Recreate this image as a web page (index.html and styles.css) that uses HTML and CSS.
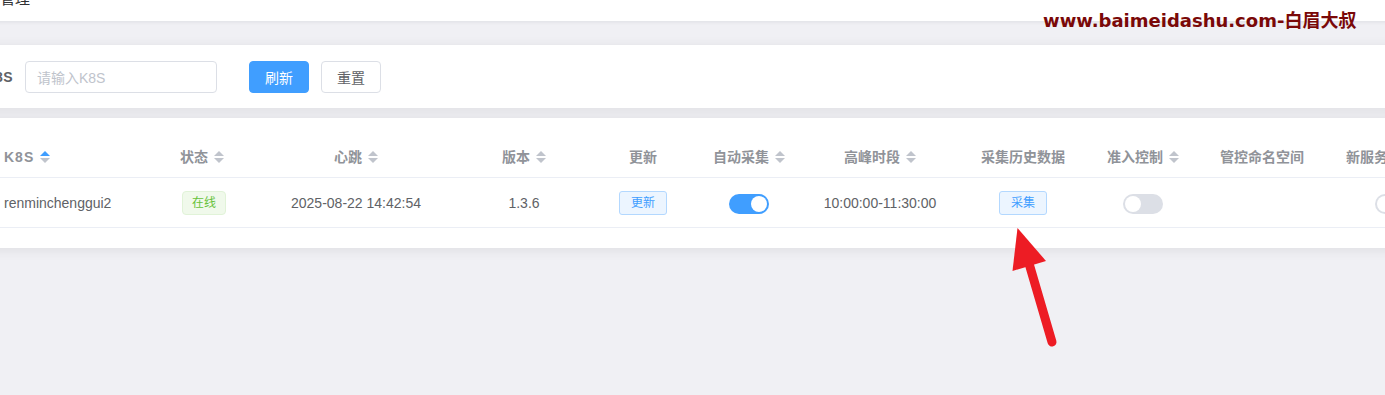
FILE: index.html
```html
<!DOCTYPE html>
<html lang="zh-CN">
<head>
<meta charset="utf-8">
<title>K8S管理</title>
<link rel="stylesheet" href="styles.css">
</head>
<body>
<div class="main">
  <header class="topbar"><span class="title">管理</span></header>

  <section class="card search-card">
    <label class="form-label">K8S</label>
    <div class="input"><span class="placeholder">请输入K8S</span></div>
    <button class="btn btn-primary">刷新</button>
    <button class="btn btn-default">重置</button>
  </section>

  <section class="card table-card">
    <table class="grid">
      <colgroup>
        <col class="c1"><col class="c2"><col class="c3"><col class="c4"><col class="c5"><col class="c6"><col class="c7"><col class="c8"><col class="c9"><col class="c10"><col class="c11">
      </colgroup>
      <thead>
        <tr>
          <th class="left">K8S<svg class="sort asc" viewBox="0 0 10 12"><path class="up" d="M5 0L10 5H0Z"/><path class="down" d="M0 7H10L5 12Z"/></svg></th>
          <th>状态<svg class="sort" viewBox="0 0 10 12"><path class="up" d="M5 0L10 5H0Z"/><path class="down" d="M0 7H10L5 12Z"/></svg></th>
          <th>心跳<svg class="sort" viewBox="0 0 10 12"><path class="up" d="M5 0L10 5H0Z"/><path class="down" d="M0 7H10L5 12Z"/></svg></th>
          <th>版本<svg class="sort" viewBox="0 0 10 12"><path class="up" d="M5 0L10 5H0Z"/><path class="down" d="M0 7H10L5 12Z"/></svg></th>
          <th>更新</th>
          <th>自动采集<svg class="sort" viewBox="0 0 10 12"><path class="up" d="M5 0L10 5H0Z"/><path class="down" d="M0 7H10L5 12Z"/></svg></th>
          <th>高峰时段<svg class="sort" viewBox="0 0 10 12"><path class="up" d="M5 0L10 5H0Z"/><path class="down" d="M0 7H10L5 12Z"/></svg></th>
          <th>采集历史数据</th>
          <th>准入控制<svg class="sort" viewBox="0 0 10 12"><path class="up" d="M5 0L10 5H0Z"/><path class="down" d="M0 7H10L5 12Z"/></svg></th>
          <th>管控命名空间</th>
          <th>新服务自动注入</th>
        </tr>
      </thead>
      <tbody>
        <tr>
          <td class="left">renminchenggui2</td>
          <td><span class="tag-success">在线</span></td>
          <td>2025-08-22 14:42:54</td>
          <td>1.3.6</td>
          <td><span class="btn-plain">更新</span></td>
          <td><span class="switch on"><span class="knob"></span></span></td>
          <td>10:00:00-11:30:00</td>
          <td><span class="btn-plain">采集</span></td>
          <td><span class="switch"><span class="knob"></span></span></td>
          <td></td>
          <td><span class="switch"><span class="knob"></span></span></td>
        </tr>
      </tbody>
    </table>
  </section>
</div>

<div class="watermark">www.baimeidashu.com-白眉大叔</div>

<svg class="arrow" width="1385" height="395" viewBox="0 0 1385 395">
  <line x1="1052" y1="342" x2="1028" y2="260" stroke="#ed1c24" stroke-width="9" stroke-linecap="round"/>
  <polygon points="1017.5,228 1046,261 1012.5,271" fill="#ed1c24"/>
</svg>
</body>
</html>
```

FILE: styles.css
```css
html, body {
  margin: 0;
  padding: 0;
}
body {
  background: #f0f0f4;
  font-family: "Liberation Sans", "Noto Sans CJK SC", sans-serif;
  color: #606266;
  overflow: hidden;
  width: 1385px;
  height: 395px;
  position: relative;
}
.main {
  margin-top: -29px;
  margin-left: -26px;
  width: 1540px;
  display: flex;
  flex-direction: column;
}
.topbar {
  height: 50px;
  background: #fff;
  box-shadow: 0 1px 4px rgba(0, 21, 41, 0.08);
  display: flex;
  align-items: center;
  padding-left: 26px;
  margin-bottom: 24px;
  position: relative;
  z-index: 1;
}
.title {
  font-size: 15px;
  color: #303133;
  position: relative;
  top: 1px;
}
.card {
  background: #fff;
  box-shadow: 0 2px 12px rgba(0, 0, 0, 0.08);
}
.search-card {
  display: flex;
  align-items: center;
  padding: 16px 0 15px 0;
  margin-bottom: 10px;
}
.form-label {
  width: 39px;
  padding-right: 12px;
  text-align: right;
  font-size: 14px;
  font-weight: bold;
  color: #606266;
  letter-spacing: 0.5px;
}
.input {
  width: 179px;
  height: 30px;
  border: 1px solid #dcdfe6;
  border-radius: 4px;
  display: flex;
  align-items: center;
  padding-left: 11px;
  box-sizing: content-box;
  margin-right: 32px;
}
.placeholder {
  font-size: 14px;
  color: #c0c4cc;
}
.btn {
  height: 32px;
  width: 60px;
  border-radius: 4px;
  font-size: 14px;
  font-family: "Liberation Sans", "Noto Sans CJK SC", sans-serif;
  padding: 0;
  cursor: pointer;
}
.btn-primary {
  background: #409eff;
  border: 1px solid #409eff;
  color: #fff;
  margin-right: 12px;
}
.btn-default {
  background: #fff;
  border: 1px solid #dcdfe6;
  color: #606266;
}
.table-card {
  padding: 20px;
}
.grid {
  border-collapse: collapse;
  table-layout: fixed;
  width: 1472px;
}
.c1 { width: 158px; }
.c2 { width: 100px; }
.c3 { width: 208px; }
.c4 { width: 128px; }
.c5 { width: 110px; }
.c6 { width: 102px; }
.c7 { width: 160px; }
.c8 { width: 126px; }
.c9 { width: 114px; }
.c10 { width: 124px; }
.c11 { width: 142px; }
.grid th {
  padding: 8px 10px;
  line-height: 23px;
  font-size: 14px;
  font-weight: bold;
  color: #909399;
  text-align: center;
  border-bottom: 1px solid #ebeef5;
  white-space: nowrap;
}
.grid td {
  padding: 12px 10px;
  line-height: 24px;
  font-size: 14px;
  color: #606266;
  text-align: center;
  border-bottom: 1px solid #ebeef5;
  white-space: nowrap;
}
.grid .left {
  text-align: left;
}
.grid th.left {
  letter-spacing: 1px;
}
.sort {
  width: 10px;
  height: 12px;
  margin-left: 6px;
  vertical-align: -1px;
  fill: #c0c4cc;
}
.sort.asc .up {
  fill: #409eff;
}
.tag-success {
  display: inline-block;
  height: 22px;
  line-height: 22px;
  padding: 0 9px;
  font-size: 12px;
  color: #67c23a;
  background: #f0f9eb;
  border: 1px solid #e1f3d8;
  border-radius: 4px;
  vertical-align: middle;
  position: relative;
  left: 2px;
}
.btn-plain {
  display: inline-block;
  height: 22px;
  line-height: 22px;
  padding: 0 11px;
  font-size: 12px;
  color: #409eff;
  background: #ecf5ff;
  border: 1px solid #b3d8ff;
  border-radius: 3px;
  vertical-align: middle;
}
.switch {
  display: inline-flex;
  align-items: center;
  width: 40px;
  height: 20px;
  border-radius: 10px;
  background: #dcdfe6;
  padding: 0 2px;
  box-sizing: border-box;
  vertical-align: middle;
}
.switch.on {
  background: #409eff;
  justify-content: flex-end;
}
.knob {
  width: 16px;
  height: 16px;
  border-radius: 50%;
  background: #fff;
}
.watermark {
  position: absolute;
  z-index: 5;
  left: 1043px;
  top: 12px;
  font-family: "DejaVu Sans", "Noto Sans CJK SC", sans-serif;
  font-weight: bold;
  font-size: 18px;
  line-height: 18px;
  color: #7a0808;
  white-space: nowrap;
}
.arrow {
  position: absolute;
  z-index: 5;
  left: 0;
  top: 0;
  pointer-events: none;
}
```
